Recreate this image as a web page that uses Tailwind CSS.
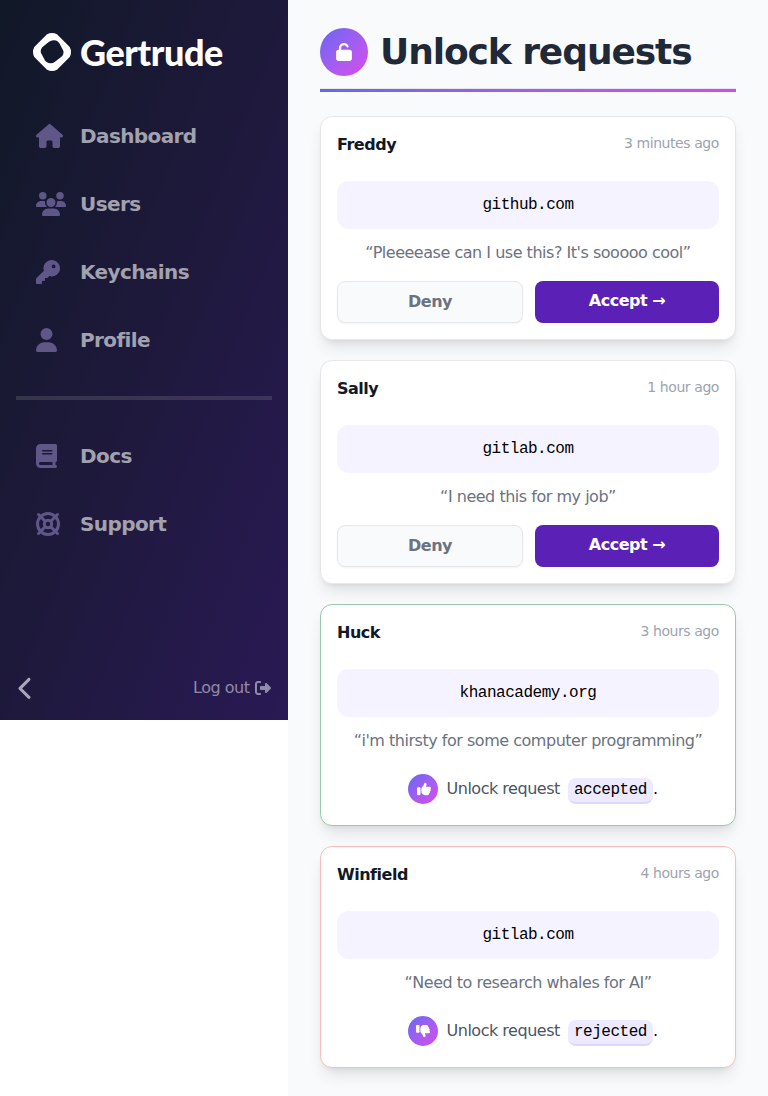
<!DOCTYPE html>
<html lang="en">
<head>
<meta charset="utf-8">
<title>Gertrude</title>
<script src="https://cdn.jsdelivr.net/npm/@tailwindcss/browser@4"></script>
</head>
<body class="bg-white font-['DejaVu_Sans',sans-serif] tracking-[-0.03em]">
<div class="flex items-start w-[768px] h-[1096px]">
  <aside class="w-72 h-[720px] shrink-0 flex flex-col bg-[linear-gradient(to_bottom_right,#111827_0%,#1e193c_50%,#2a1955_100%)]">
    <div class="flex items-center pl-8 pt-8 h-[72px]">
      <svg class="size-10 shrink-0" viewBox="0 0 40 40"><path fill="#fff" fill-rule="evenodd" d="M15 2.300Q20-.3 25 2.300L37.700 15Q40.300 20 37.700 25L25 37.700Q20 40.300 15 37.700L2.300 25Q-.3 20 2.300 15ZM16.700 10L10.500 15Q8 17.500 9 21L12.500 27.500Q14.500 31.500 19 31.300Q21 31.300 23 29.800L29.700 24.500Q32.200 22 31.300 18.800L27.500 11.500Q25.300 7.800 21.500 8.200Q19 8.300 16.700 10Z"/></svg>
      <span class="ml-2 text-white text-4xl leading-10 tracking-[-0.4px] font-['Lato',sans-serif] font-black">Gertrude</span>
    </div>
    <nav class="pt-8 text-xl leading-7 tracking-[-0.03em] font-bold text-[#a2a1ae]">
      <a class="flex items-center h-16 mb-1 pl-9"><span class="w-11 flex"><svg class="h-6 fill-[#5e5787]" viewBox="0 0 576 512"><path d="M575.800 255.500c0 18-15 32.100-32 32.100h-32l.7 160.200c0 2.700-.2 5.400-.5 8.100V472c0 22.100-17.900 40-40 40H392c-22.100 0-40-17.900-40-40V384c0-17.700-14.300-32-32-32H256c-17.700 0-32 14.300-32 32v88c0 22.100-17.900 40-40 40H104c-22.100 0-40-17.900-40-40V287.600H32c-18 0-32-14-32-32.100c0-9 3-17 10-24L266.400 8c7-7 15-8 22-8s15 2 21 7L564.800 231.500c8 7 12 15 11 24z"/></svg></span>Dashboard</a>
      <a class="flex items-center h-16 mb-1 pl-9"><span class="w-11 flex"><svg class="h-6 fill-[#5e5787]" viewBox="0 0 640 512"><path d="M144 0a80 80 0 1 1 0 160A80 80 0 1 1 144 0zM512 0a80 80 0 1 1 0 160A80 80 0 1 1 512 0zM0 298.700C0 239.800 47.800 192 106.700 192h42.700c15.900 0 31 3.500 44.600 9.700c-1.300 7.200-1.900 14.700-1.900 22.300c0 38.200 16.800 72.500 43.300 96H21.300C9.600 320 0 310.400 0 298.700zM404.600 320c26.600-23.500 43.300-57.800 43.300-96c0-7.600-.7-15-1.900-22.300c13.600-6.300 28.700-9.700 44.600-9.700h42.700C592.200 192 640 239.800 640 298.700c0 11.800-9.600 21.300-21.300 21.300zM224 224a96 96 0 1 1 192 0a96 96 0 1 1 -192 0zM128 485.300C128 411.700 187.700 352 261.300 352H378.700C452.300 352 512 411.700 512 485.300c0 14.700-11.900 26.700-26.700 26.700H154.700c-14.700 0-26.700-11.900-26.700-26.700z"/></svg></span>Users</a>
      <a class="flex items-center h-16 mb-1 pl-9"><span class="w-11 flex"><svg class="h-6 fill-[#5e5787]" viewBox="0 0 512 512"><path d="M336 352c97.200 0 176-78.800 176-176S433.200 0 336 0S160 78.800 160 176c0 18.700 2.900 36.800 8.300 53.700L7 391c-4.500 4.500-7 10.600-7 17v80c0 13.300 10.700 24 24 24h80c13.300 0 24-10.700 24-24V448h40c13.300 0 24-10.700 24-24V384h40c6.400 0 12.500-2.500 17-7l33.300-33.300c16.900 5.400 35 8.300 53.700 8.300zM376 96a40 40 0 1 1 0 80 40 40 0 1 1 0-80z"/></svg></span>Keychains</a>
      <a class="flex items-center h-16 pl-9"><span class="w-11 flex"><svg class="h-6 fill-[#5e5787]" viewBox="0 0 448 512"><path d="M224 256A128 128 0 1 0 224 0a128 128 0 1 0 0 256zm-45.700 48C79.800 304 0 383.800 0 482.300C0 498.700 13.300 512 29.700 512H418.300c16.400 0 29.700-13.300 29.700-29.700C448 383.800 368.200 304 269.700 304H178.300z"/></svg></span>Profile</a>
      <div class="mx-4 mt-6 mb-6 h-1 bg-white/12"></div>
      <a class="flex items-center h-16 mb-1 pl-9"><span class="w-11 flex"><svg class="h-6 fill-[#5e5787]" viewBox="0 0 448 512"><path d="M96 0C43 0 0 43 0 96V416c0 53 43 96 96 96H416c17.700 0 32-14.300 32-32s-14.300-32-32-32V384c17.700 0 32-14.300 32-32V32c0-17.700-14.300-32-32-32H96zm0 384H352v64H96c-17.700 0-32-14.300-32-32s14.300-32 32-32zm32-240c0-8.800 7.200-16 16-16H336c8.800 0 16 7.200 16 16s-7.200 16-16 16H144c-8.800 0-16-7.200-16-16zm16 48H336c8.800 0 16 7.200 16 16s-7.200 16-16 16H144c-8.800 0-16-7.200-16-16s7.200-16 16-16z"/></svg></span>Docs</a>
      <a class="flex items-center h-16 pl-9"><span class="w-11 flex"><svg class="size-6 stroke-[#5e5787]" fill="none" viewBox="0 0 24 24"><circle cx="12" cy="12" r="10.500" stroke-width="3"/><circle cx="12" cy="12" r="3.700" stroke-width="3"/><path stroke-width="3" stroke-linecap="round" d="M2.500 2.500l6.500 6.500M15 15l6.500 6.500M21.500 2.500l-6.500 6.500M9 15l-6.500 6.500"/></svg></span>Support</a>
    </nav>
    <div class="mt-auto h-16 pl-[17px] pr-[17px] flex items-center justify-between text-[#918ba8]">
      <svg class="h-6 w-[15px] fill-[#aaa7b8]" viewBox="0 0 320 512"><path d="M9.400 233.400c-12.500 12.500-12.500 32.800 0 45.300l192 192c12.500 12.500 32.800 12.500 45.300 0s12.500-32.800 0-45.300L77.300 256 246.600 86.600c12.500-12.500 12.500-32.800 0-45.300s-32.800-12.500-45.300 0l-192 192z" transform="translate(32 8)"/></svg>
      <span class="flex items-center gap-[5.5px]">Log out <svg class="size-4 fill-[#918ba8]" viewBox="0 0 512 512"><path d="M377.900 105.900L500.700 228.700c7.200 7.200 11.300 17.100 11.300 27.300s-4.100 20.100-11.300 27.300L377.900 406.100c-6.400 6.400-15 9.900-24 9.900c-18.700 0-33.900-15.200-33.900-33.900V320H192c-17.700 0-32-14.300-32-32V224c0-17.700 14.300-32 32-32H320V129.900c0-18.700 15.200-33.900 33.900-33.900c9 0 17.600 3.600 24 9.900zM160 96H96c-17.700 0-32 14.300-32 32V384c0 17.700 14.300 32 32 32h64c17.700 0 32 14.300 32 32s-14.300 32-32 32H96c-53 0-96-43-96-96V128C0 75 43 32 96 32h64c17.700 0 32 14.300 32 32s-14.300 32-32 32z"/></svg></span>
    </div>
  </aside>
  <main class="w-[480px] h-[1096px] bg-[#f9fafb] px-8 pt-7">
    <header class="flex items-center h-12">
      <span class="size-12 rounded-full bg-linear-to-br from-[#6366f1] to-[#d946ef] flex items-center justify-center"><svg class="w-4 h-[18px] fill-white" viewBox="0 0 448 512"><path d="M144 144c0-44.200 35.800-80 80-80c31.900 0 59.400 18.600 72.300 45.700c7.600 16 26.700 22.800 42.600 15.200s22.800-26.700 15.200-42.600C331 33.700 281.500 0 224 0C144.500 0 80 64.500 80 144v48H64c-35.300 0-64 28.700-64 64V448c0 35.300 28.700 64 64 64H384c35.300 0 64-28.700 64-64V256c0-35.300-28.700-64-64-64H144V144z"/></svg></span>
      <h1 class="ml-3 text-4xl tracking-[-0.03em] font-bold text-[#1f2937] whitespace-nowrap">Unlock requests</h1>
    </header>
    <div class="mt-3 h-1 border-t border-[#e5e7eb] bg-linear-to-r from-[#6366f1] to-[#d946ef] bg-clip-padding"></div>
    <div class="mt-6 flex flex-col gap-5">
      <section class="h-56 bg-white border border-[#e5e7eb] rounded-xl shadow-lg px-4 pt-4">
        <div class="flex justify-between h-[22px]"><h2 class="font-bold text-[#111827] leading-6">Freddy</h2><span class="text-sm leading-5 tracking-[-0.03em] text-[#9ca3af]">3 minutes ago</span></div>
        <div class="mt-[26px] h-12 rounded-xl bg-[#f5f3ff] flex items-center justify-center text-black font-['Liberation_Mono',monospace]">github.com</div>
        <p class="mt-3 text-center text-[#6b7280]">“Pleeeease can I use this? It's sooooo cool”</p>
        <div class="mt-4 flex gap-3 font-bold"><button class="w-[186px] h-[42px] rounded-lg border border-[#e5e7eb] bg-[#f9fafb] text-[#6b7280] shadow-xs">Deny</button><button class="flex-1 h-[42px] pb-0.5 rounded-lg bg-[#5b21b6] text-white">Accept →</button></div>
      </section>
      <section class="h-56 bg-white border border-[#e5e7eb] rounded-xl shadow-lg px-4 pt-4">
        <div class="flex justify-between h-[22px]"><h2 class="font-bold text-[#111827] leading-6">Sally</h2><span class="text-sm leading-5 tracking-[-0.03em] text-[#9ca3af]">1 hour ago</span></div>
        <div class="mt-[26px] h-12 rounded-xl bg-[#f5f3ff] flex items-center justify-center text-black font-['Liberation_Mono',monospace]">gitlab.com</div>
        <p class="mt-3 text-center text-[#6b7280]">“I need this for my job”</p>
        <div class="mt-4 flex gap-3 font-bold"><button class="w-[186px] h-[42px] rounded-lg border border-[#e5e7eb] bg-[#f9fafb] text-[#6b7280] shadow-xs">Deny</button><button class="flex-1 h-[42px] pb-0.5 rounded-lg bg-[#5b21b6] text-white">Accept →</button></div>
      </section>
      <section class="h-[222px] bg-white border border-[#98cbaa] rounded-xl shadow-lg px-4 pt-4">
        <div class="flex justify-between h-[22px]"><h2 class="font-bold text-[#111827] leading-6">Huck</h2><span class="text-sm leading-5 tracking-[-0.03em] text-[#9ca3af]">3 hours ago</span></div>
        <div class="mt-[26px] h-12 rounded-xl bg-[#f5f3ff] flex items-center justify-center text-black font-['Liberation_Mono',monospace]">khanacademy.org</div>
        <p class="mt-3 text-center text-[#6b7280]">“i'm thirsty for some computer programming”</p>
        <div class="mt-[21px] pl-[71px] flex items-center h-[30px]">
          <span class="size-[30px] rounded-full bg-linear-to-br from-[#6366f1] to-[#d946ef] flex items-center justify-center"><svg class="size-3.5 ml-px fill-white" viewBox="0 0 512 512"><path d="M313.400 32.900c26 5.200 42.900 30.500 37.700 56.500l-2.300 11.400c-5.300 26.700-15.100 52.100-28.800 75.200H464c26.500 0 48 21.500 48 48c0 18.500-10.500 34.600-25.900 42.600C497 275.400 504 288.900 504 304c0 23.400-16.800 42.900-38.900 47.100c4.400 7.300 6.900 15.800 6.900 24.900c0 21.300-13.900 39.400-33.100 45.600c.7 3.300 1.100 6.800 1.100 10.400c0 26.500-21.500 48-48 48H294.500c-19 0-37.500-5.600-53.300-16.100l-38.500-25.700C176 420.400 160 390.400 160 358.300V247.100c0-29.200 13.300-56.700 36-75l7.400-5.900c26.500-21.200 44.600-51 51.200-84.200l2.300-11.400c5.200-26 30.500-42.900 56.500-37.700zM32 192H96c17.700 0 32 14.300 32 32V448c0 17.700-14.300 32-32 32H32c-17.700 0-32-14.300-32-32V224c0-17.700 14.300-32 32-32z"/></svg></span>
          <span class="ml-[8.5px] text-[#4b5563]">Unlock request</span><span class="ml-[8.6px] mt-1 h-[26px] pl-[5.5px] pr-1.5 rounded-lg bg-[#ede9fe] border-b-2 border-[#ddd6fe] text-black leading-6 font-['Liberation_Mono',monospace]">accepted</span><span>.</span>
        </div>
      </section>
      <section class="h-[222px] bg-white border border-[#f9bcbc] rounded-xl shadow-lg px-4 pt-4">
        <div class="flex justify-between h-[22px]"><h2 class="font-bold text-[#111827] leading-6">Winfield</h2><span class="text-sm leading-5 tracking-[-0.03em] text-[#9ca3af]">4 hours ago</span></div>
        <div class="mt-[26px] h-12 rounded-xl bg-[#f5f3ff] flex items-center justify-center text-black font-['Liberation_Mono',monospace]">gitlab.com</div>
        <p class="mt-3 text-center text-[#6b7280]">“Need to research whales for AI”</p>
        <div class="mt-[21px] pl-[71px] flex items-center h-[30px]">
          <span class="size-[30px] rounded-full bg-linear-to-br from-[#6366f1] to-[#d946ef] flex items-center justify-center"><svg class="size-3.5 fill-white" viewBox="0 0 512 512"><path transform="matrix(1 0 0 -1 0 512)" d="M313.400 32.900c26 5.200 42.900 30.500 37.700 56.500l-2.300 11.400c-5.300 26.700-15.100 52.100-28.800 75.200H464c26.500 0 48 21.500 48 48c0 18.500-10.500 34.600-25.900 42.600C497 275.400 504 288.900 504 304c0 23.400-16.800 42.900-38.900 47.100c4.400 7.300 6.900 15.800 6.900 24.900c0 21.300-13.900 39.400-33.100 45.600c.7 3.300 1.100 6.800 1.100 10.400c0 26.500-21.500 48-48 48H294.500c-19 0-37.500-5.600-53.300-16.100l-38.500-25.700C176 420.400 160 390.400 160 358.300V247.100c0-29.200 13.300-56.700 36-75l7.400-5.900c26.500-21.200 44.600-51 51.200-84.200l2.300-11.400c5.200-26 30.500-42.900 56.500-37.700zM32 192H96c17.700 0 32 14.300 32 32V448c0 17.700-14.300 32-32 32H32c-17.700 0-32-14.300-32-32V224c0-17.700 14.300-32 32-32z"/></svg></span>
          <span class="ml-[8.5px] text-[#4b5563]">Unlock request</span><span class="ml-[8.6px] mt-1 h-[26px] pl-[5.5px] pr-1.5 rounded-lg bg-[#ede9fe] border-b-2 border-[#ddd6fe] text-black leading-6 font-['Liberation_Mono',monospace]">rejected</span><span>.</span>
        </div>
      </section>
    </div>
  </main>
</div>
</body>
</html>
